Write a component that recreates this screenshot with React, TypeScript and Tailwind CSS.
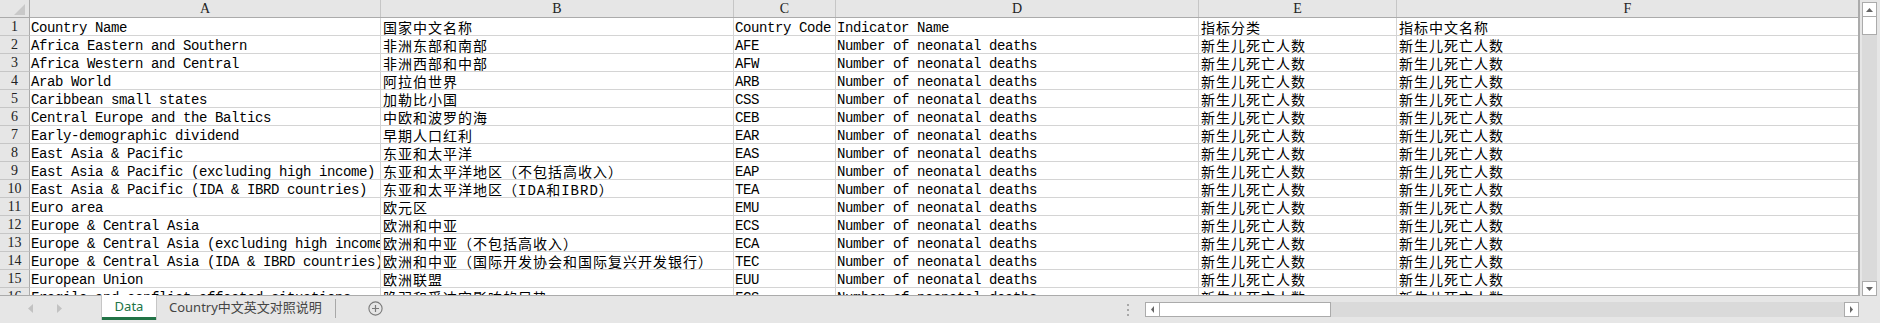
import React from 'react';

const cols = [
    { key: 'A', w: 'w-[351px]', cjk: false },
    { key: 'B', w: 'w-[353px]', cjk: true },
    { key: 'C', w: 'w-[102px]', cjk: false },
    { key: 'D', w: 'w-[363px]', cjk: false },
    { key: 'E', w: 'w-[198px]', cjk: true },
    { key: 'F', w: 'flex-1', cjk: true },
];

const regions: [string, string, string][] = [
    ['Africa Eastern and Southern', '非洲东部和南部', 'AFE'],
    ['Africa Western and Central', '非洲西部和中部', 'AFW'],
    ['Arab World', '阿拉伯世界', 'ARB'],
    ['Caribbean small states', '加勒比小国', 'CSS'],
    ['Central Europe and the Baltics', '中欧和波罗的海', 'CEB'],
    ['Early-demographic dividend', '早期人口红利', 'EAR'],
    ['East Asia & Pacific', '东亚和太平洋', 'EAS'],
    ['East Asia & Pacific (excluding high income)', '东亚和太平洋地区（不包括高收入）', 'EAP'],
    ['East Asia & Pacific (IDA & IBRD countries)', '东亚和太平洋地区（IDA和IBRD）', 'TEA'],
    ['Euro area', '欧元区', 'EMU'],
    ['Europe & Central Asia', '欧洲和中亚', 'ECS'],
    ['Europe & Central Asia (excluding high income)', '欧洲和中亚（不包括高收入）', 'ECA'],
    ['Europe & Central Asia (IDA & IBRD countries)', '欧洲和中亚（国际开发协会和国际复兴开发银行）', 'TEC'],
    ['European Union', '欧洲联盟', 'EUU'],
    ['Fragile and conflict affected situations', '脆弱和受冲突影响的局势', 'FCS'],
];

const rows: string[][] = [
    ['Country Name', '国家中文名称', 'Country Code', 'Indicator Name', '指标分类', '指标中文名称'],
    ...regions.map(([en, zh, code]) => [en, zh, code, 'Number of neonatal deaths', '新生儿死亡人数', '新生儿死亡人数']),
];

const cellFont = { fontFamily: '"Liberation Mono", "Noto Sans CJK SC", monospace' };
const headFont = { fontFamily: '"Liberation Serif", "Noto Sans CJK SC", serif' };
const uiFont = { fontFamily: '"Noto Sans", "Noto Sans CJK SC", sans-serif' };

function ScrollBtn({ dir }: { dir: 'up' | 'down' | 'left' | 'right' }) {
    const pts = {
        up: '1,5 8,5 4.5,1',
        down: '1,1 8,1 4.5,5',
        left: '4,1 4,8 1,4.5',
        right: '1,1 1,8 4,4.5',
    }[dir];
    const vertical = dir === 'up' || dir === 'down';
    return (
        <div className="w-[15px] h-[15px] shrink-0 bg-white border border-[#ababab] flex items-center justify-center">
            <svg width={vertical ? 9 : 5} height={vertical ? 6 : 9}>
                <polygon points={pts} fill="#666" />
            </svg>
        </div>
    );
}

export default function App() {
    return (
        <div className="w-[1880px] h-[323px] bg-[#e6e6e6] flex flex-col overflow-hidden text-black">
            <div className="flex h-[296px]">
                {/* Grid */}
                <div className="w-[1860px] h-[296px] overflow-hidden bg-white border-r-2 border-b border-[#ababab] flex flex-col">
                    <div className="flex h-[18px] shrink-0 bg-[#e6e6e6] border-b border-[#ababab]">
                        <div className="w-[30px] shrink-0 border-r border-[#ababab] flex items-end justify-end pr-[4px] pb-[2px]">
                            <svg width="11" height="11">
                                <polygon points="11,0 11,11 0,11" fill="#c9c9c9" />
                            </svg>
                        </div>
                        {cols.map((c, i) => (
                            <div
                                key={c.key}
                                style={headFont}
                                className={`${c.w} shrink-0 text-center text-[14px] leading-[17px] text-[#222] ${i < cols.length - 1 ? 'border-r border-[#c6c6c6]' : ''}`}
                            >
                                {c.key}
                            </div>
                        ))}
                    </div>
                    {rows.map((r, ri) => (
                        <div key={ri} className="flex h-[18px] shrink-0">
                            <div
                                style={headFont}
                                className="w-[30px] shrink-0 h-[18px] bg-[#e6e6e6] border-r border-[#ababab] border-b border-b-[#c6c6c6] text-center text-[14px] leading-[18px] text-[#222]"
                            >
                                {ri + 1}
                            </div>
                            {cols.map((c, ci) => (
                                <div
                                    key={c.key}
                                    style={cellFont}
                                    className={`${c.w} shrink-0 h-[18px] border-b border-[#d4d4d4] overflow-hidden whitespace-nowrap text-[14px] leading-[18px] ${ci < cols.length - 1 ? 'border-r' : ''} ${c.cjk ? 'tracking-[1px] pt-[2px] pl-[2px]' : 'tracking-[-0.4px] pt-[1px] pl-[1px]'}`}
                                >
                                    {r[ci]}
                                </div>
                            ))}
                        </div>
                    ))}
                </div>

                {/* Vertical scrollbar */}
                <div className="w-[20px] h-[296px] flex flex-col pl-[2px] pr-[3px] pt-[2px]">
                    <ScrollBtn dir="up" />
                    <div className="h-[18px] shrink-0 bg-white border border-t-0 border-[#ababab]" />
                    <div className="flex-1 bg-[#dadada]" />
                    <ScrollBtn dir="down" />
                </div>
            </div>

            {/* Sheet tabs + horizontal scrollbar */}
            <div className="h-[27px] flex items-start" style={uiFont}>
                <div className="w-[101px] h-[25px] flex items-center pl-[28px] gap-[24px]">
                    <svg width="5" height="9"><polygon points="5,0 5,9 0,4.5" fill="#c2c2c2" /></svg>
                    <svg width="5" height="9"><polygon points="0,0 0,9 5,4.5" fill="#c2c2c2" /></svg>
                </div>
                <div className="w-[56px] h-[25px] -mt-[1px] bg-white border-x border-[#c6c6c6] flex flex-col">
                    <div className="flex-1 flex items-center justify-center text-[13px] text-[#217346] pt-[1px]">Data</div>
                    <div className="h-[3px] bg-[#217346]" />
                </div>
                <div className="w-[178px] h-[24px] flex items-center pl-[12px] text-[13px] text-[#444] whitespace-nowrap">
                    Country中文英文对照说明
                </div>
                <div className="w-px h-[19px] mt-[3px] bg-[#a8a8a8]" />
                <div className="ml-[32px] h-[24px] flex items-center">
                    <svg width="15" height="15" viewBox="0 0 15 15">
                        <circle cx="7.5" cy="7.5" r="6.6" fill="none" stroke="#7a7a7a" strokeWidth="1.1" />
                        <path d="M7.5 4 V11 M4 7.5 H11" stroke="#7a7a7a" strokeWidth="1.2" />
                    </svg>
                </div>
                <div className="ml-auto w-[754px] h-[27px] flex items-start pt-[6px] pr-[21px]">
                    <div className="w-[19px] h-[15px] flex flex-col justify-center gap-[3px] pl-[1px]">
                        <div className="w-[2px] h-[2px] bg-[#a8a8a8]" />
                        <div className="w-[2px] h-[2px] bg-[#a8a8a8]" />
                        <div className="w-[2px] h-[2px] bg-[#a8a8a8]" />
                    </div>
                    <div className="flex-1 h-[15px] flex bg-[#dadada]">
                        <ScrollBtn dir="left" />
                        <div className="w-[171px] h-[15px] bg-white border border-l-0 border-[#ababab]" />
                        <div className="flex-1" />
                        <ScrollBtn dir="right" />
                    </div>
                </div>
            </div>
        </div>
    );
}
